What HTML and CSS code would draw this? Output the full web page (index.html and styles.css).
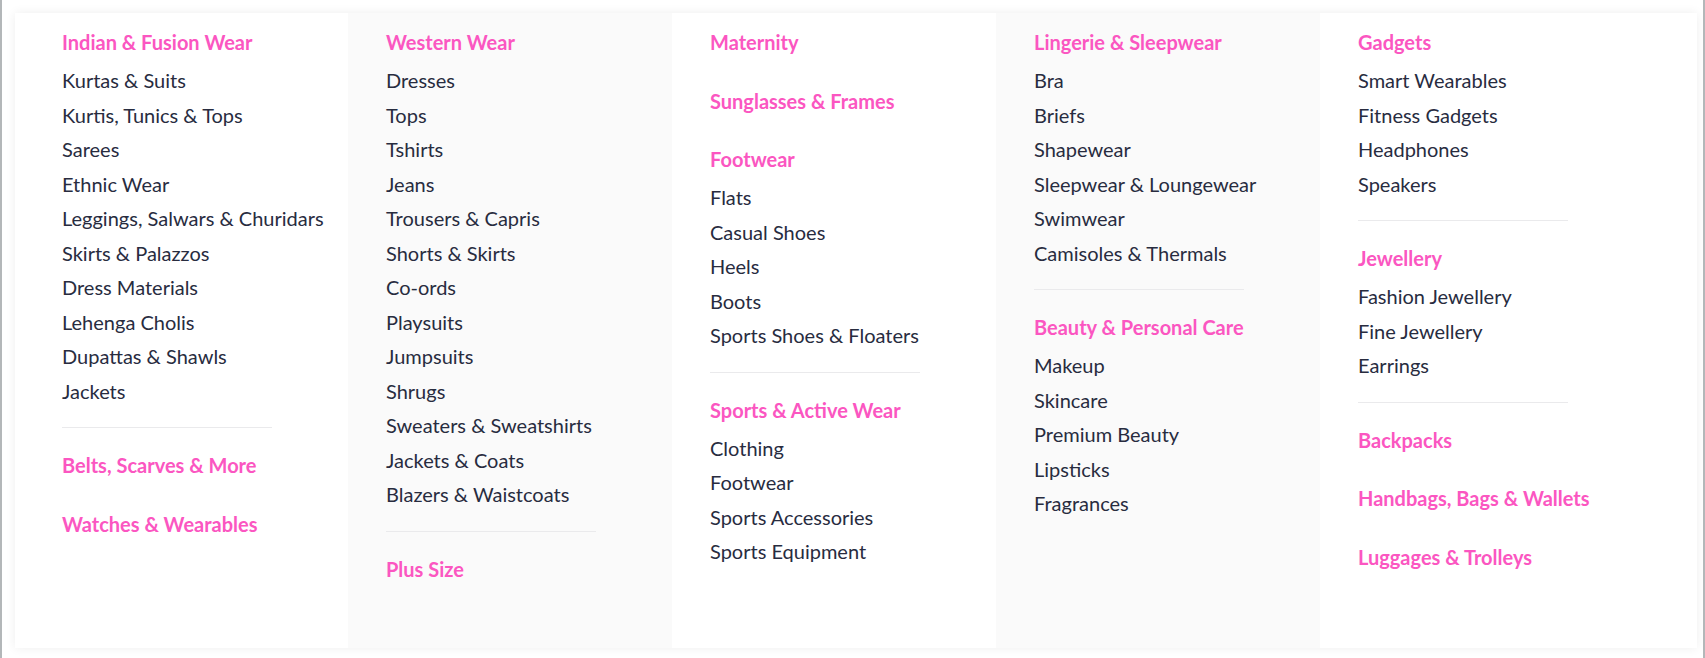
FILE: index.html
```html
<!DOCTYPE html>
<html lang="en">
<head>
<meta charset="utf-8">
<title>Women Categories</title>
<link rel="stylesheet" href="styles.css">
</head>
<body>
<div class="page">
  <div class="panel">
    <div class="col">
      <div class="group">
        <div class="cat">Indian &amp; Fusion Wear</div>
        <div class="link">Kurtas &amp; Suits</div>
        <div class="link">Kurtis, Tunics &amp; Tops</div>
        <div class="link">Sarees</div>
        <div class="link">Ethnic Wear</div>
        <div class="link">Leggings, Salwars &amp; Churidars</div>
        <div class="link">Skirts &amp; Palazzos</div>
        <div class="link">Dress Materials</div>
        <div class="link">Lehenga Cholis</div>
        <div class="link">Dupattas &amp; Shawls</div>
        <div class="link">Jackets</div>
      </div>
      <div class="divider"></div>
      <div class="group solo"><div class="cat">Belts, Scarves &amp; More</div></div>
      <div class="group solo"><div class="cat">Watches &amp; Wearables</div></div>
    </div>
    <div class="col odd">
      <div class="group">
        <div class="cat">Western Wear</div>
        <div class="link">Dresses</div>
        <div class="link">Tops</div>
        <div class="link">Tshirts</div>
        <div class="link">Jeans</div>
        <div class="link">Trousers &amp; Capris</div>
        <div class="link">Shorts &amp; Skirts</div>
        <div class="link">Co-ords</div>
        <div class="link">Playsuits</div>
        <div class="link">Jumpsuits</div>
        <div class="link">Shrugs</div>
        <div class="link">Sweaters &amp; Sweatshirts</div>
        <div class="link">Jackets &amp; Coats</div>
        <div class="link">Blazers &amp; Waistcoats</div>
      </div>
      <div class="divider"></div>
      <div class="group solo"><div class="cat">Plus Size</div></div>
    </div>
    <div class="col">
      <div class="group solo"><div class="cat">Maternity</div></div>
      <div class="group solo"><div class="cat">Sunglasses &amp; Frames</div></div>
      <div class="group">
        <div class="cat">Footwear</div>
        <div class="link">Flats</div>
        <div class="link">Casual Shoes</div>
        <div class="link">Heels</div>
        <div class="link">Boots</div>
        <div class="link">Sports Shoes &amp; Floaters</div>
      </div>
      <div class="divider"></div>
      <div class="group">
        <div class="cat">Sports &amp; Active Wear</div>
        <div class="link">Clothing</div>
        <div class="link">Footwear</div>
        <div class="link">Sports Accessories</div>
        <div class="link">Sports Equipment</div>
      </div>
    </div>
    <div class="col odd">
      <div class="group">
        <div class="cat">Lingerie &amp; Sleepwear</div>
        <div class="link">Bra</div>
        <div class="link">Briefs</div>
        <div class="link">Shapewear</div>
        <div class="link">Sleepwear &amp; Loungewear</div>
        <div class="link">Swimwear</div>
        <div class="link">Camisoles &amp; Thermals</div>
      </div>
      <div class="divider"></div>
      <div class="group">
        <div class="cat">Beauty &amp; Personal Care</div>
        <div class="link">Makeup</div>
        <div class="link">Skincare</div>
        <div class="link">Premium Beauty</div>
        <div class="link">Lipsticks</div>
        <div class="link">Fragrances</div>
      </div>
    </div>
    <div class="col">
      <div class="group">
        <div class="cat">Gadgets</div>
        <div class="link">Smart Wearables</div>
        <div class="link">Fitness Gadgets</div>
        <div class="link">Headphones</div>
        <div class="link">Speakers</div>
      </div>
      <div class="divider"></div>
      <div class="group">
        <div class="cat">Jewellery</div>
        <div class="link">Fashion Jewellery</div>
        <div class="link">Fine Jewellery</div>
        <div class="link">Earrings</div>
      </div>
      <div class="divider"></div>
      <div class="group solo"><div class="cat">Backpacks</div></div>
      <div class="group solo"><div class="cat">Handbags, Bags &amp; Wallets</div></div>
      <div class="group solo"><div class="cat">Luggages &amp; Trolleys</div></div>
    </div>
  </div>
</div>
</body>
</html>
```

FILE: styles.css
```css
* { box-sizing: border-box; }
html, body { margin: 0; padding: 0; }
body {
  width: 1705px;
  height: 658px;
  overflow: hidden;
  background: #ffffff;
  font-family: "Lato", "Open Sans", sans-serif;
  border-left: 2px solid #b3b7b9;
  border-right: 2px solid #b3b7b9;
}
.page {
  height: 658px;
  padding: 13px 6px 10px 13px;
}
.panel {
  height: 635px;
  background: #ffffff;
  box-shadow: 0 0 10px rgba(0, 0, 0, 0.07);
  padding-left: 9px;
  display: flex;
}
.col {
  width: 324px;
  height: 100%;
  padding: 12px 0 0 38px;
  background: #ffffff;
}
.col.odd { background: #fafafa; }
.group { padding-bottom: 19px; }
.group.solo { padding-bottom: 20.5px; }
.cat {
  color: #fb56c1;
  font-size: 20px;
  font-weight: 700;
  line-height: 34.5px;
  margin-bottom: 3.5px;
}
.link {
  color: #282c3f;
  font-size: 20px;
  line-height: 34.5px;
  font-weight: 400;
}
.divider {
  width: 210px;
  height: 1px;
  background: #eaeaec;
  margin-bottom: 20px;
}
```
